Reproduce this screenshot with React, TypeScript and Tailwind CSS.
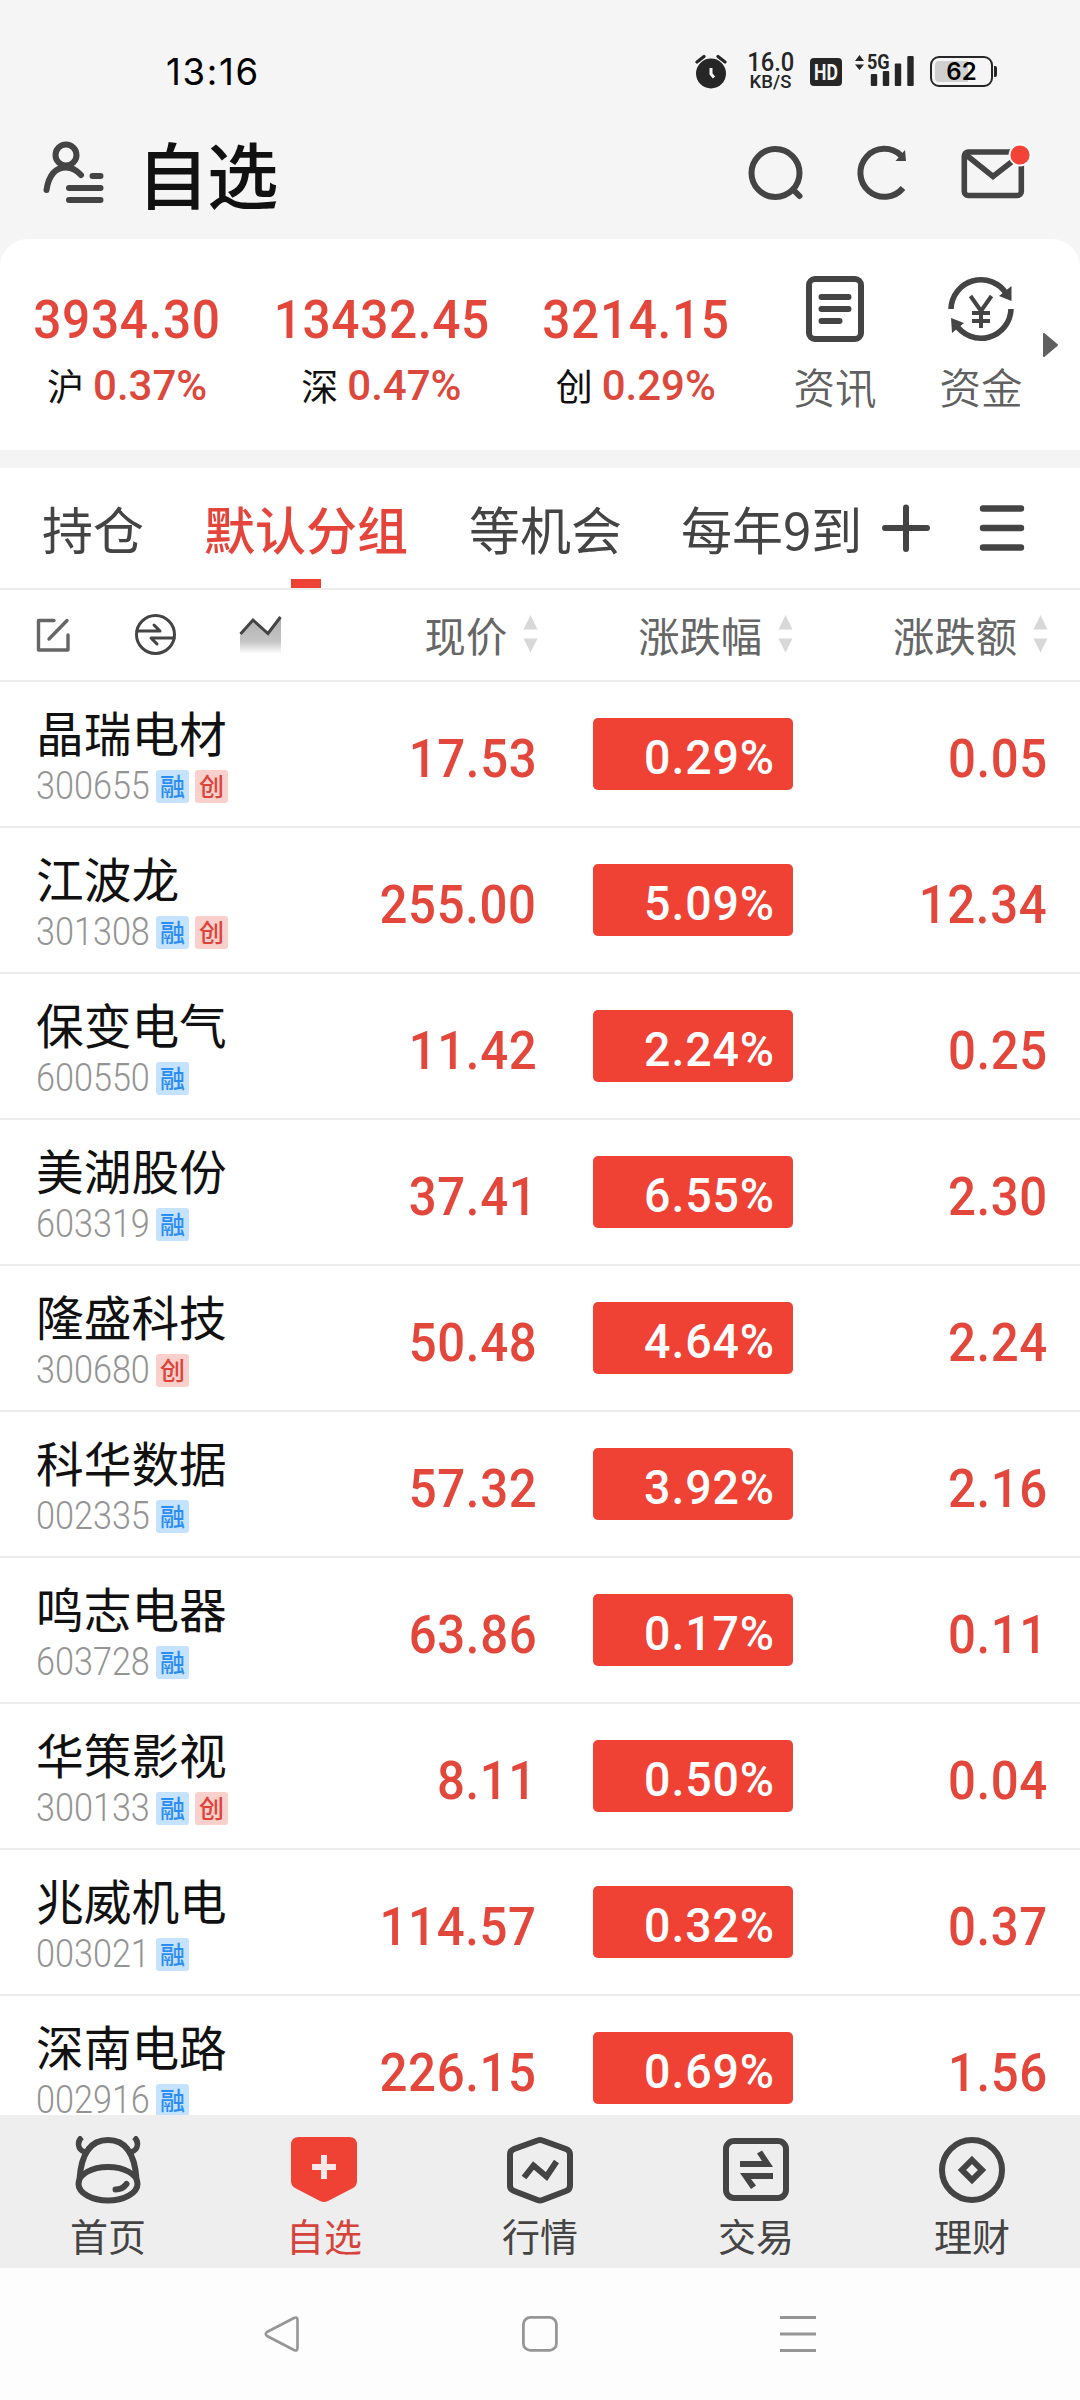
import type { ReactNode } from 'react';

const INK = '#444444';

type Stock = { name: string; code: string; tags: string[]; price: string; pct: string; diff: string };

const stocks: Stock[] = [
  { name: '晶瑞电材', code: '300655', tags: ['融', '创'], price: '17.53', pct: '0.29%', diff: '0.05' },
  { name: '江波龙', code: '301308', tags: ['融', '创'], price: '255.00', pct: '5.09%', diff: '12.34' },
  { name: '保变电气', code: '600550', tags: ['融'], price: '11.42', pct: '2.24%', diff: '0.25' },
  { name: '美湖股份', code: '603319', tags: ['融'], price: '37.41', pct: '6.55%', diff: '2.30' },
  { name: '隆盛科技', code: '300680', tags: ['创'], price: '50.48', pct: '4.64%', diff: '2.24' },
  { name: '科华数据', code: '002335', tags: ['融'], price: '57.32', pct: '3.92%', diff: '2.16' },
  { name: '鸣志电器', code: '603728', tags: ['融'], price: '63.86', pct: '0.17%', diff: '0.11' },
  { name: '华策影视', code: '300133', tags: ['融', '创'], price: '8.11', pct: '0.50%', diff: '0.04' },
  { name: '兆威机电', code: '003021', tags: ['融'], price: '114.57', pct: '0.32%', diff: '0.37' },
  { name: '深南电路', code: '002916', tags: ['融'], price: '226.15', pct: '0.69%', diff: '1.56' },
];

const indices = [
  { label: '沪', value: '3934.30', pct: '0.37%' },
  { label: '深', value: '13432.45', pct: '0.47%' },
  { label: '创', value: '3214.15', pct: '0.29%' },
];

function StatusBar() {
  return (
    <div className="flex h-[104px] pl-[166px] font-['Inter',sans-serif] text-black">
      <div className="mt-[50px] w-[529px] text-[36.500px] leading-[44px] tracking-[1.700px]">13:16</div>
      <svg className="mt-[54px]" width="32" height="36" viewBox="0 0 32 36">
        <circle cx="16" cy="19.5" r="15" fill="#262626" />
        <path d="M2 8 L9 2.5 M30 8 L23 2.5" stroke="#262626" strokeWidth="3.2" strokeLinecap="round" />
        <path d="M16 14 V20 L19 23.5" fill="none" stroke="#f5f5f5" strokeWidth="3" />
      </svg>
      <div className="mt-[52px] ml-[19px] flex w-[49px] flex-col items-center font-['Roboto',sans-serif] text-[#262626]">
        <span className="scale-x-[0.95] text-[25px] leading-[21px] font-medium">16.0</span>
        <span className="text-[18.500px] leading-[19px] font-medium">KB/S</span>
      </div>
      <div className="mt-[58px] ml-[15px] flex h-[28px] w-[32px] items-center justify-center rounded-[4px] bg-[#262626] font-['Roboto',sans-serif] text-[22px] font-bold text-[#f5f5f5]">
        <span className="scale-x-[0.8]">HD</span>
      </div>
      <div className="relative mt-[52px] ml-[12px] h-[36px] w-[62px]">
        <svg width="62" height="36" viewBox="0 0 62 36" fill="#262626">
          <path d="M1 9 L5.5 3 L10 9 Z M1 12.5 L5.5 18 L10 12.5 Z" />
          <rect x="16.8" y="22" width="6.4" height="12" rx="1" />
          <rect x="28.8" y="19" width="6.4" height="15" rx="1" />
          <rect x="40.8" y="11.5" width="6.4" height="22.5" rx="1" />
          <rect x="53.3" y="4" width="6.4" height="30" rx="1" />
        </svg>
        <span className="absolute top-0 left-[13px] origin-left scale-x-[0.88] font-['Roboto',sans-serif] text-[20.500px] leading-[20px] font-bold text-[#262626]">
          5G
        </span>
      </div>
      <div className="mt-[56px] ml-[14px] flex h-[31px] items-center">
        <div className="relative flex h-[31px] w-[63px] items-center justify-center rounded-[9px] border-2 border-[#262626]">
          <div className="absolute top-[3px] left-[3px] h-[21px] w-[33px] rounded-l-[4px] bg-[#d0d0d0]" />
          <span className="relative text-[24px] leading-none font-semibold">62</span>
        </div>
        <div className="ml-[1px] h-[11px] w-[3px] rounded-r-[2px] bg-[#262626]" />
      </div>
    </div>
  );
}

function TitleBar() {
  return (
    <div className="flex h-[135px] pl-[42px]">
      <svg className="mt-[36px]" width="64" height="66" viewBox="0 0 64 66" fill="none" stroke={INK} strokeWidth="6" strokeLinecap="round">
        <circle cx="24" cy="15" r="10.5" />
        <path d="M4.5 50 C7 34 14 27.500 24 27.500 C30 27.500 34.500 30 39 35" />
        <path d="M50.500 36 H58.500 M27 48 H58.500 M27 60 H58.500" />
      </svg>
      <h1 className="mt-[33px] ml-[31px] w-[603px] text-[71.500px] leading-[70px] font-medium tracking-[-1.500px] text-[#111]">自选</h1>
      <svg className="mt-[40px]" width="66" height="60" viewBox="0 0 66 60" fill="none" stroke={INK} strokeWidth="6">
        <circle cx="35.500" cy="29" r="24" />
        <path d="M53 45.500 L59.500 52" strokeLinecap="round" />
      </svg>
      <svg className="mt-[40px] ml-[44px]" width="64" height="60" viewBox="0 0 64 60" fill="none" stroke={INK} strokeWidth="6">
        <path d="M53 44 A24 24 0 1 1 51 11.500" />
        <path d="M55 6 L56 17 H45.500 Z" fill={INK} stroke="none" />
      </svg>
      <svg className="mt-[36px] ml-[44px]" width="76" height="62" viewBox="0 0 76 62" fill="none" stroke={INK} strokeWidth="5.600">
        <rect x="6.300" y="12" width="57" height="43.500" rx="4" />
        <path d="M7 14 L35 36.500 L60 17" />
        <circle cx="62" cy="15" r="10.500" fill="#f44236" stroke="#fff" strokeWidth="1.800" />
      </svg>
    </div>
  );
}

function Shortcut({ label, children }: { label: string; children: ReactNode }) {
  return (
    <div className="flex w-[146px] flex-col items-center pt-[35px] pr-[2px]">
      {children}
      <span className="mt-[22px] text-[41.500px] leading-[42px] font-[350] text-[#606060]">{label}</span>
    </div>
  );
}

function IndexCard() {
  return (
    <div className="flex h-[211px] overflow-hidden rounded-t-[28px] bg-white pt-[1px]">
      {indices.map((it) => (
        <div key={it.label} className="flex w-[254.300px] flex-col items-center">
          <span className="mt-[51px] scale-x-[0.910] font-['Roboto',sans-serif] text-[54.500px] leading-[56px] font-medium tracking-[0.700px] text-[#e3463a]">
            {it.value}
          </span>
          <div className="mt-[17px] flex h-[44px] items-center">
            <span className="-mt-[3px] text-[37px] leading-[44px] text-[#111]">{it.label}</span>
            <span className="ml-[9px] font-['Roboto',sans-serif] text-[42px] leading-[44px] font-medium text-[#dd483d]">{it.pct}</span>
          </div>
        </div>
      ))}
      <Shortcut label="资讯">
        <svg width="58" height="68" viewBox="0 0 58 68" fill="none" stroke={INK} strokeWidth="6">
          <rect x="3" y="4" width="52" height="60" rx="6" />
          <path d="M15.500 22 H42.500 M15.500 34 H42.500 M15.500 46 H33.500" strokeLinecap="round" />
        </svg>
      </Shortcut>
      <Shortcut label="资金">
        <svg width="68" height="68" viewBox="0 0 68 68" fill="none" stroke={INK} strokeWidth="5.600">
          <path d="M4 34 A30 30 0 0 1 59.500 19" />
          <path d="M64 34 A30 30 0 0 1 8.500 49" />
          <path d="M64.500 11 V26 L52 21 Z M4 43 L17 48 L5 58 Z" fill={INK} stroke="none" />
          <path d="M23.500 21 L34 36 L44.500 21 M34 35 V53 M25 38 H43 M25 46 H43" strokeWidth="4" />
        </svg>
      </Shortcut>
      <svg className="-ml-[13px] mt-[91px]" width="17" height="28" viewBox="0 0 17 28">
        <path d="M2 3 L15 14 L2 25 Z" fill="#606060" stroke="#606060" strokeWidth="2" strokeLinejoin="round" />
      </svg>
    </div>
  );
}

function Tabs() {
  return (
    <div className="flex h-[122px] border-b-2 border-[#ededed] bg-white pl-[42px] text-[51px] leading-[56px] text-[#444]">
      <span className="mt-[32px] w-[162px] shrink-0">持仓</span>
      <div className="relative w-[265px] shrink-0 font-medium text-[#e5443a]">
        <span className="mt-[32px] block">默认分组</span>
        <div className="absolute bottom-0 left-[87px] h-[9px] w-[30px] bg-[#ee4135]" />
      </div>
      <span className="mt-[32px] w-[212px] shrink-0">等机会</span>
      <span className="mt-[32px] w-[199px] shrink-0 whitespace-nowrap">每年9到</span>
      <svg className="mt-[35px] shrink-0" width="52" height="52" viewBox="0 0 52 52" stroke={INK} strokeWidth="6" strokeLinecap="round">
        <path d="M26 4.500 V46 M5 25 H47" />
      </svg>
      <svg className="mt-[35px] ml-[46px] shrink-0" width="48" height="52" viewBox="0 0 48 52" stroke={INK} strokeWidth="6.400" strokeLinecap="round">
        <path d="M5 5.500 H43 M5 25 H43 M5 44.500 H43" />
      </svg>
    </div>
  );
}

function Sort() {
  return (
    <svg className="ml-[16px]" width="15" height="40" viewBox="0 0 15 40" fill="#d8d8d8">
      <path d="M7.500 0 L14.500 14.500 H0.500 Z M0.500 23.500 H14.500 L7.500 37.500 Z" />
    </svg>
  );
}

function ColumnHeads() {
  return (
    <div className="flex h-[92px] border-b-2 border-[#ededed] bg-white pl-[35px]">
      <svg className="mt-[27px]" width="36" height="37" viewBox="0 0 36 37" fill="none" stroke="#666" strokeWidth="3.400" strokeLinecap="round" strokeLinejoin="round">
        <path d="M19 3.500 H3.500 V33 H33 V18" />
        <path d="M32 3.500 L14 22" />
      </svg>
      <svg className="mt-[23px] ml-[63px]" width="43" height="43" viewBox="0 0 43 43" fill="none" stroke={INK} strokeWidth="3" strokeLinecap="round">
        <circle cx="21.500" cy="21.500" r="19" />
        <path d="M3 18 H26 L20 12 M40 25 H17 L23 31" strokeLinejoin="round" />
      </svg>
      <svg className="mt-[24px] ml-[62px]" width="44" height="42" viewBox="0 0 44 42" fill="none">
        <defs>
          <linearGradient id="area" x1="0" y1="0" x2="0" y2="1">
            <stop offset="0" stopColor="#b0b0b0" />
            <stop offset="0.650" stopColor="#c4c4c4" />
            <stop offset="1" stopColor="#ffffff" />
          </linearGradient>
        </defs>
        <path d="M1 21 L14 6 L29 20 L42 3 V40 H1 Z" fill="url(#area)" />
        <path d="M1.500 20 L14 6 L29 19.500 L41.500 3" stroke={INK} strokeWidth="3" />
      </svg>
      <div className="flex flex-1 items-center justify-end pr-[32px] text-[41.300px] leading-[44px] text-[#666]">
        <span className="-mt-[3px]">现价</span>
        <Sort />
        <span className="-mt-[3px] ml-[100px]">涨跌幅</span>
        <Sort />
        <span className="-mt-[3px] ml-[100px]">涨跌额</span>
        <Sort />
      </div>
    </div>
  );
}

function Tag({ text }: { text: string }) {
  const tone = text === '融' ? 'bg-[#c5e2fe] text-[#2c8df0]' : 'bg-[#fad0cd] text-[#dc443a]';
  return (
    <span className={`mr-[6px] flex h-[33px] w-[33px] items-center justify-center rounded-[3px] text-[25px] font-medium ${tone}`}>
      <span className="-mt-[3px] leading-[30px]">{text}</span>
    </span>
  );
}

function StockRow({ s }: { s: Stock }) {
  return (
    <div className="flex h-[146px] shrink-0 items-center border-b-2 border-[#ededed] bg-white pl-[36px] font-['Roboto',sans-serif]">
      <div className="h-full w-[230px] shrink-0 pt-[26px]">
        <div className="font-['Noto_Sans_CJK_SC',sans-serif] text-[47.700px] leading-[48px] text-[#111]">{s.name}</div>
        <div className="mt-[14px] flex h-[33px] items-center font-['Noto_Sans_CJK_SC',sans-serif]">
          <span className="w-[120px] origin-left scale-x-[0.900] font-['Roboto',sans-serif] text-[38px] leading-[33px] font-light whitespace-nowrap text-[#949494]">
            {s.code}
          </span>
          {s.tags.map((t) => (
            <Tag key={t} text={t} />
          ))}
        </div>
      </div>
      <div className="mt-[9px] flex w-[271px] justify-end">
        <span className="origin-right scale-x-[0.91] text-[54px] leading-[56px] font-medium tracking-[0.700px] text-[#e3463a]">{s.price}</span>
      </div>
      <div className="ml-[56px] flex h-[72px] w-[200px] items-center justify-end rounded-[5px] bg-[#ef4134] pt-[7px] pr-[18px]">
        <span className="origin-right scale-x-[0.970] text-[48px] leading-[56px] font-medium tracking-[0.900px] text-white">{s.pct}</span>
      </div>
      <div className="mt-[9px] flex w-[254.500px] justify-end">
        <span className="origin-right scale-x-[0.91] text-[54px] leading-[56px] font-medium tracking-[0.700px] text-[#e3463a]">{s.diff}</span>
      </div>
    </div>
  );
}

function NavItem({ label, active, children }: { label: string; active?: boolean; children: ReactNode }) {
  return (
    <div className="flex flex-1 flex-col items-center pt-[21px]">
      <svg width="68" height="68" viewBox="0 0 68 68" fill="none" stroke={INK} strokeWidth="6">
        {children}
      </svg>
      <span className={`mt-[11px] text-[38px] leading-[40px] ${active ? 'text-[#d6433a]' : 'text-[#444]'}`}>{label}</span>
    </div>
  );
}

function BottomNav() {
  return (
    <div className="flex h-[153px] bg-[#eeeeee]">
      <NavItem label="首页">
        <path d="M4.500 48 C4.500 38 18 31 34 31 C50 31 63.500 38 63.500 48 C63.500 57 50 64.500 34 64.500 C18 64.500 4.500 57 4.500 48 Z" />
        <path d="M5.500 43 C7 22 14 4 34 4 C54 4 61 22 62.500 43" />
        <path d="M8 1 C3 5 3 14 11 16 M60 1 C65 5 65 14 57 16" strokeWidth="5.500" />
        <path d="M41.500 53.500 C47 53.500 50 51.500 52.500 48" strokeLinecap="round" />
      </NavItem>
      <NavItem label="自选" active>
        <path d="M9 1 H59 Q67 1 67 9 V45 Q67 49.500 63 52 L38 65 Q34 67 30 65 L5 52 Q1 49.500 1 45 V9 Q1 1 9 1 Z" fill="#ef4134" stroke="none" />
        <path d="M34 19 V43 M22 31 H46" stroke="#f8e8e7" />
      </NavItem>
      <NavItem label="行情">
        <path d="M31.500 4.500 Q34 3.500 36.500 4.500 L60 13 Q64 14.500 64 18.500 V49.500 Q64 53.500 60 55 L36.500 64 Q34 65 31.500 64 L8 55 Q4 53.500 4 49.500 V18.500 Q4 14.500 8 13 Z" />
        <path d="M18 41.500 L27.500 29.500 L40.500 40.500 L50.500 25.500" />
      </NavItem>
      <NavItem label="交易">
        <rect x="4" y="5" width="60" height="57" rx="8" />
        <path d="M18 31 V25 H40 L35 17.500 L40 14.500 L51 31 Z M51 37 V43 H29 L34 49.500 L29 53 L18 37 Z" fill={INK} stroke="none" />
      </NavItem>
      <NavItem label="理财">
        <circle cx="34" cy="34" r="30" />
        <path d="M34 24 L44 34 L34 44 L24 34 Z" />
      </NavItem>
    </div>
  );
}

function SystemBar() {
  return (
    <div className="flex h-[132px] items-start bg-[#fdfdfd] pt-[46px] pl-[262px]">
      <svg width="40" height="40" viewBox="0 0 40 40" fill="none" stroke="#969696" strokeWidth="2.600" strokeLinejoin="round">
        <path d="M32 4 Q35.500 2.500 35.500 6 V34 Q35.500 37.500 32 36 L5 22 Q2.500 20 5 18 Z" />
      </svg>
      <svg className="ml-[218px]" width="40" height="40" viewBox="0 0 40 40" fill="none" stroke="#969696" strokeWidth="2.800">
        <rect x="3.400" y="3.400" width="33" height="33" rx="7" />
      </svg>
      <svg className="ml-[218px]" width="40" height="40" viewBox="0 0 40 40" fill="none" stroke="#969696" strokeWidth="3">
        <path d="M2 3.500 H38 M2 20 H38 M2 36.500 H38" />
      </svg>
    </div>
  );
}

export default function App() {
  return (
    <div className="flex h-[2400px] w-[1080px] flex-col overflow-hidden bg-[#f5f5f5] font-['Noto_Sans_CJK_SC',sans-serif]">
      <StatusBar />
      <TitleBar />
      <IndexCard />
      <div className="h-[18px] shrink-0 bg-[#f4f4f4]" />
      <Tabs />
      <ColumnHeads />
      <div className="flex h-[1433px] flex-col overflow-hidden bg-white">
        {stocks.map((s) => (
          <StockRow key={s.code} s={s} />
        ))}
      </div>
      <BottomNav />
      <SystemBar />
    </div>
  );
}
